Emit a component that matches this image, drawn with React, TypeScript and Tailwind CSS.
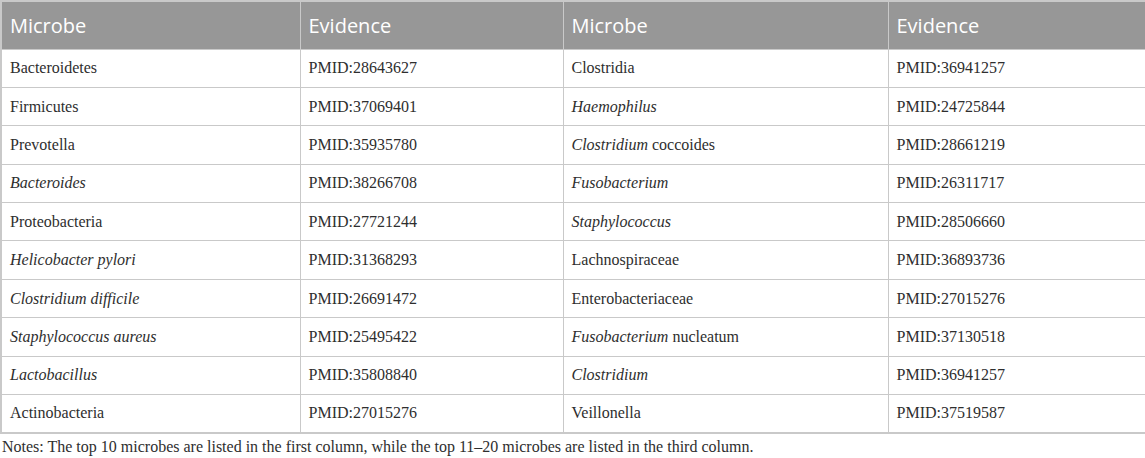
const rows: [React.ReactNode, string, React.ReactNode, string][] = [
  ["Bacteroidetes", "PMID:28643627", "Clostridia", "PMID:36941257"],
  ["Firmicutes", "PMID:37069401", <i>Haemophilus</i>, "PMID:24725844"],
  ["Prevotella", "PMID:35935780", <><i>Clostridium</i> coccoides</>, "PMID:28661219"],
  [<i>Bacteroides</i>, "PMID:38266708", <i>Fusobacterium</i>, "PMID:26311717"],
  ["Proteobacteria", "PMID:27721244", <i>Staphylococcus</i>, "PMID:28506660"],
  [<i>Helicobacter pylori</i>, "PMID:31368293", "Lachnospiraceae", "PMID:36893736"],
  [<i>Clostridium difficile</i>, "PMID:26691472", "Enterobacteriaceae", "PMID:27015276"],
  [<i>Staphylococcus aureus</i>, "PMID:25495422", <><i>Fusobacterium</i> nucleatum</>, "PMID:37130518"],
  [<i>Lactobacillus</i>, "PMID:35808840", <i>Clostridium</i>, "PMID:36941257"],
  ["Actinobacteria", "PMID:27015276", "Veillonella", "PMID:37519587"],
];

const headers = ["Microbe", "Evidence", "Microbe", "Evidence"];

export default function App() {
  return (
    <div className="w-[1145px] h-[458px] bg-white">
      <table className="w-[1145px] table-fixed border-collapse border-2 border-[#c9c9c9]">
        <colgroup>
          <col className="w-[299px]" />
          <col className="w-[263px]" />
          <col className="w-[325px]" />
          <col className="w-[258px]" />
        </colgroup>
        <thead>
          <tr className="h-[48px] bg-[#979797]">
            {headers.map((h, i) => (
              <th
                key={i}
                className="border border-[#c9c9c9] px-[8px] pt-[2px] text-left align-middle font-['Open_Sans',sans-serif] text-[20px] font-normal text-white"
              >
                {h}
              </th>
            ))}
          </tr>
        </thead>
        <tbody>
          {rows.map((r, i) => (
            <tr key={i} className="h-[38.4px]">
              {r.map((c, j) => (
                <td
                  key={j}
                  className="border border-[#c9c9c9] px-[8px] align-middle font-['Liberation_Serif',serif] text-[16px] text-[#2e2e2e]"
                >
                  {c}
                </td>
              ))}
            </tr>
          ))}
        </tbody>
      </table>
      <p className="mt-[1px] pl-[2px] font-['Liberation_Serif',serif] text-[16px] text-[#2e2e2e]">
        Notes: The top 10 microbes are listed in the first column, while the top 11–20 microbes are listed in the third column.
      </p>
    </div>
  );
}
